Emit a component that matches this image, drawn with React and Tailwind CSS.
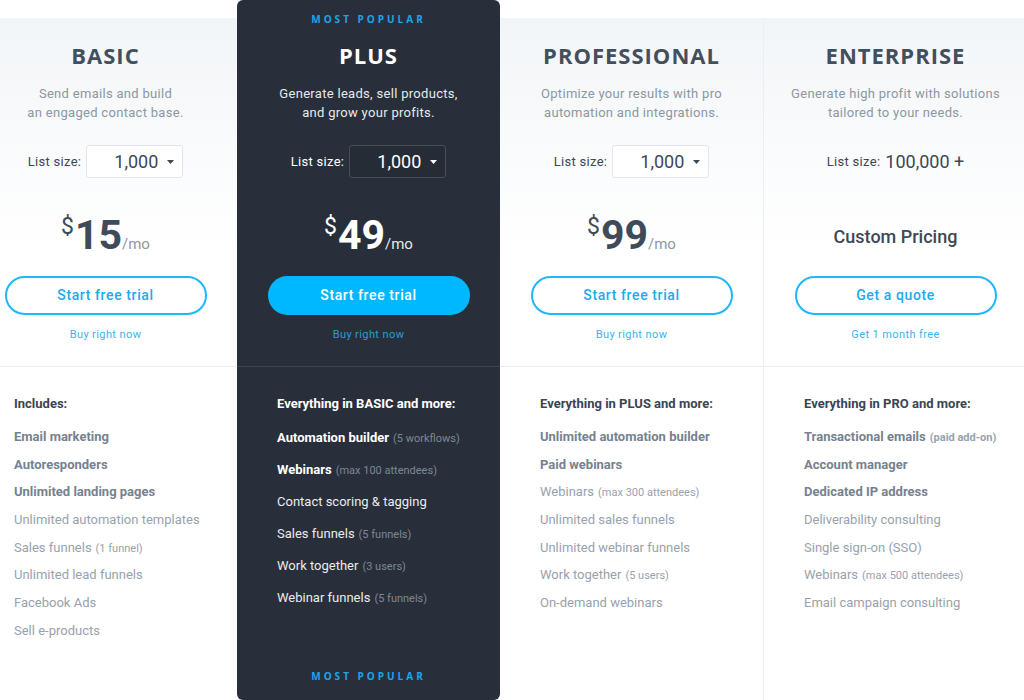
const plans = [
  {
    name: 'BASIC',
    desc: ['Send emails and build', 'an engaged contact base.'],
    list: '1,000',
    price: '15',
    cta: 'Start free trial',
    sub: 'Buy right now',
    header: 'Includes:',
    features: [
      { t: 'Email marketing', b: true },
      { t: 'Autoresponders', b: true },
      { t: 'Unlimited landing pages', b: true },
      { t: 'Unlimited automation templates' },
      { t: 'Sales funnels', n: '(1 funnel)' },
      { t: 'Unlimited lead funnels' },
      { t: 'Facebook Ads' },
      { t: 'Sell e-products' },
    ],
  },
  {
    name: 'PLUS',
    dark: true,
    desc: ['Generate leads, sell products,', 'and grow your profits.'],
    list: '1,000',
    price: '49',
    cta: 'Start free trial',
    sub: 'Buy right now',
    header: 'Everything in BASIC and more:',
    features: [
      { t: 'Automation builder', n: '(5 workflows)', b: true },
      { t: 'Webinars', n: '(max 100 attendees)', b: true },
      { t: 'Contact scoring & tagging' },
      { t: 'Sales funnels', n: '(5 funnels)' },
      { t: 'Work together', n: '(3 users)' },
      { t: 'Webinar funnels', n: '(5 funnels)' },
    ],
  },
  {
    name: 'PROFESSIONAL',
    desc: ['Optimize your results with pro', 'automation and integrations.'],
    list: '1,000',
    price: '99',
    cta: 'Start free trial',
    sub: 'Buy right now',
    header: 'Everything in PLUS and more:',
    features: [
      { t: 'Unlimited automation builder', b: true },
      { t: 'Paid webinars', b: true },
      { t: 'Webinars', n: '(max 300 attendees)' },
      { t: 'Unlimited sales funnels' },
      { t: 'Unlimited webinar funnels' },
      { t: 'Work together', n: '(5 users)' },
      { t: 'On-demand webinars' },
    ],
  },
  {
    name: 'ENTERPRISE',
    desc: ['Generate high profit with solutions', 'tailored to your needs.'],
    custom: true,
    cta: 'Get a quote',
    sub: 'Get 1 month free',
    header: 'Everything in PRO and more:',
    features: [
      { t: 'Transactional emails', n: '(paid add-on)', b: true },
      { t: 'Account manager', b: true },
      { t: 'Dedicated IP address', b: true },
      { t: 'Deliverability consulting' },
      { t: 'Single sign-on (SSO)' },
      { t: 'Webinars', n: '(max 500 attendees)' },
      { t: 'Email campaign consulting' },
    ],
  },
]

const Caret = ({ dark }) => (
  <svg width="7" height="4" viewBox="0 0 7 4" className="ml-[9px]">
    <polygon points="0,0 7,0 3.5,4" fill={dark ? '#ffffff' : '#3d4853'} />
  </svg>
)

const MostPopular = () => (
  <span className="font-['Open_Sans',sans-serif] text-[10px] leading-[12px] font-bold tracking-[3px] text-[#1ba5ea]">
    MOST POPULAR
  </span>
)

const PlanColumn = ({ plan }) => {
  const dark = plan.dark
  return (
    <div
      className={`w-[263px] shrink-0 flex flex-col ${
        dark
          ? 'bg-[#282f3a] rounded-[6px]'
          : 'bg-[linear-gradient(to_bottom,#ffffff_18px,#f2f5f8_18px,#ffffff_250px)]'
      }`}
    >
      <div
        className={`h-[367px] shrink-0 flex flex-col items-center border-b ${
          dark ? 'border-[#3d4550]' : 'border-[#e9edf0]'
        }`}
      >
        <div className="h-[40px] pt-[13px] flex justify-center">
          {dark && <MostPopular />}
        </div>
        <h2
          className={`font-['Open_Sans',sans-serif] text-[22px] leading-[30px] font-bold tracking-[1px] ${
            dark ? 'text-white' : 'text-[#434f5c]'
          }`}
        >
          {plan.name}
        </h2>
        <div
          className={`mt-[14px] text-[13px] leading-[19px] tracking-[0.3px] text-center ${
            dark ? 'text-[#e6e9ed]' : 'text-[#8c97a2]'
          }`}
        >
          {plan.desc.map((d) => (
            <p key={d}>{d}</p>
          ))}
        </div>
        <div className="mt-[23px] h-[33px] flex items-center">
          <span
            className={`text-[13px] tracking-[0.3px] ${
              dark ? 'text-white' : 'text-[#3d4853]'
            }`}
          >
            List size:
          </span>
          {plan.custom ? (
            <span className="ml-[5px] text-[18px] text-[#3d4853]">100,000 +</span>
          ) : (
            <div
              className={`ml-[5px] w-[97px] h-[33px] rounded-[3px] border flex items-center justify-end pr-[8px] ${
                dark ? 'border-[#454e5a] bg-[#262c36]' : 'border-[#e3e7eb] bg-white'
              }`}
            >
              <span className={`text-[18px] ${dark ? 'text-white' : 'text-[#3d4853]'}`}>
                {plan.list}
              </span>
              <Caret dark={dark} />
            </div>
          )}
        </div>
        <div className="mt-[35px] h-[44px] flex items-baseline justify-center">
          {plan.custom ? (
            <span className="text-[18px] leading-[44px] pt-[2px] font-medium text-[#3d4853]">
              Custom Pricing
            </span>
          ) : (
            <>
              <span
                className={`relative -top-[15px] text-[23px] leading-none ${
                  dark ? 'text-white' : 'text-[#3f4b58]'
                }`}
              >
                $
              </span>
              <span
                className={`ml-[1px] text-[41px] leading-[44px] font-bold ${
                  dark ? 'text-white' : 'text-[#3f4b58]'
                }`}
              >
                {plan.price}
              </span>
              <span
                className={`text-[15px] leading-none ${
                  dark ? 'text-[#e6e9ed]' : 'text-[#8d98a3]'
                }`}
              >
                /mo
              </span>
            </>
          )}
        </div>
        <button
          className={`mt-[19px] w-[202px] h-[39px] rounded-full text-[14px] font-medium tracking-[0.6px] ${
            dark
              ? 'bg-[#00b8ff] text-white'
              : 'border-2 border-[#1fb7fb] bg-white text-[#1ea9ef]'
          }`}
        >
          {plan.cta}
        </button>
        <span
          className={`mt-[12px] text-[11px] leading-[16px] tracking-[0.4px] ${
            dark ? 'text-[#2c9bd8]' : 'text-[#3cb4ee]'
          }`}
        >
          {plan.sub}
        </span>
      </div>

      <div className="pl-[40px] pt-[27px] flex flex-col">
        <h3
          className={`text-[13px] leading-[20px] font-bold ${
            dark ? 'text-white' : 'text-[#3b4552]'
          }`}
        >
          {plan.header}
        </h3>
        <ul className={dark ? 'mt-[8px]' : 'mt-[9px]'}>
          {plan.features.map((f) => (
            <li
              key={f.t}
              className={`text-[13px] ${
                dark ? 'h-[32px] leading-[32px]' : 'h-[27.7px] leading-[27.7px]'
              } ${
                dark
                  ? f.b
                    ? 'font-bold text-white'
                    : 'text-[#e9ecef]'
                  : f.b
                  ? 'font-bold text-[#75828f]'
                  : 'text-[#98a2ac]'
              }`}
            >
              {f.t}
              {f.n && (
                <span
                  className={`ml-[4px] text-[11px] leading-none ${
                    dark ? 'font-normal text-[#7d8895]' : 'text-[#98a2ac]'
                  }`}
                >
                  {f.n}
                </span>
              )}
            </li>
          ))}
        </ul>
      </div>

      {dark && (
        <div className="mt-auto pb-[18px] flex justify-center">
          <MostPopular />
        </div>
      )}
    </div>
  )
}

const App = () => {
  return (
    <div className="w-[1024px] h-[700px] overflow-hidden bg-white font-['Roboto',sans-serif]">
      <div className="flex -ml-[26px] w-[1052px] h-[700px]">
        {plans.map((plan, i) => (
          <div key={plan.name} className="flex">
            {i === plans.length - 1 && (
              <div className="w-px mt-[18px] bg-[#eceff2]" />
            )}
            <PlanColumn plan={plan} />
          </div>
        ))}
      </div>
    </div>
  )
}

export default App
